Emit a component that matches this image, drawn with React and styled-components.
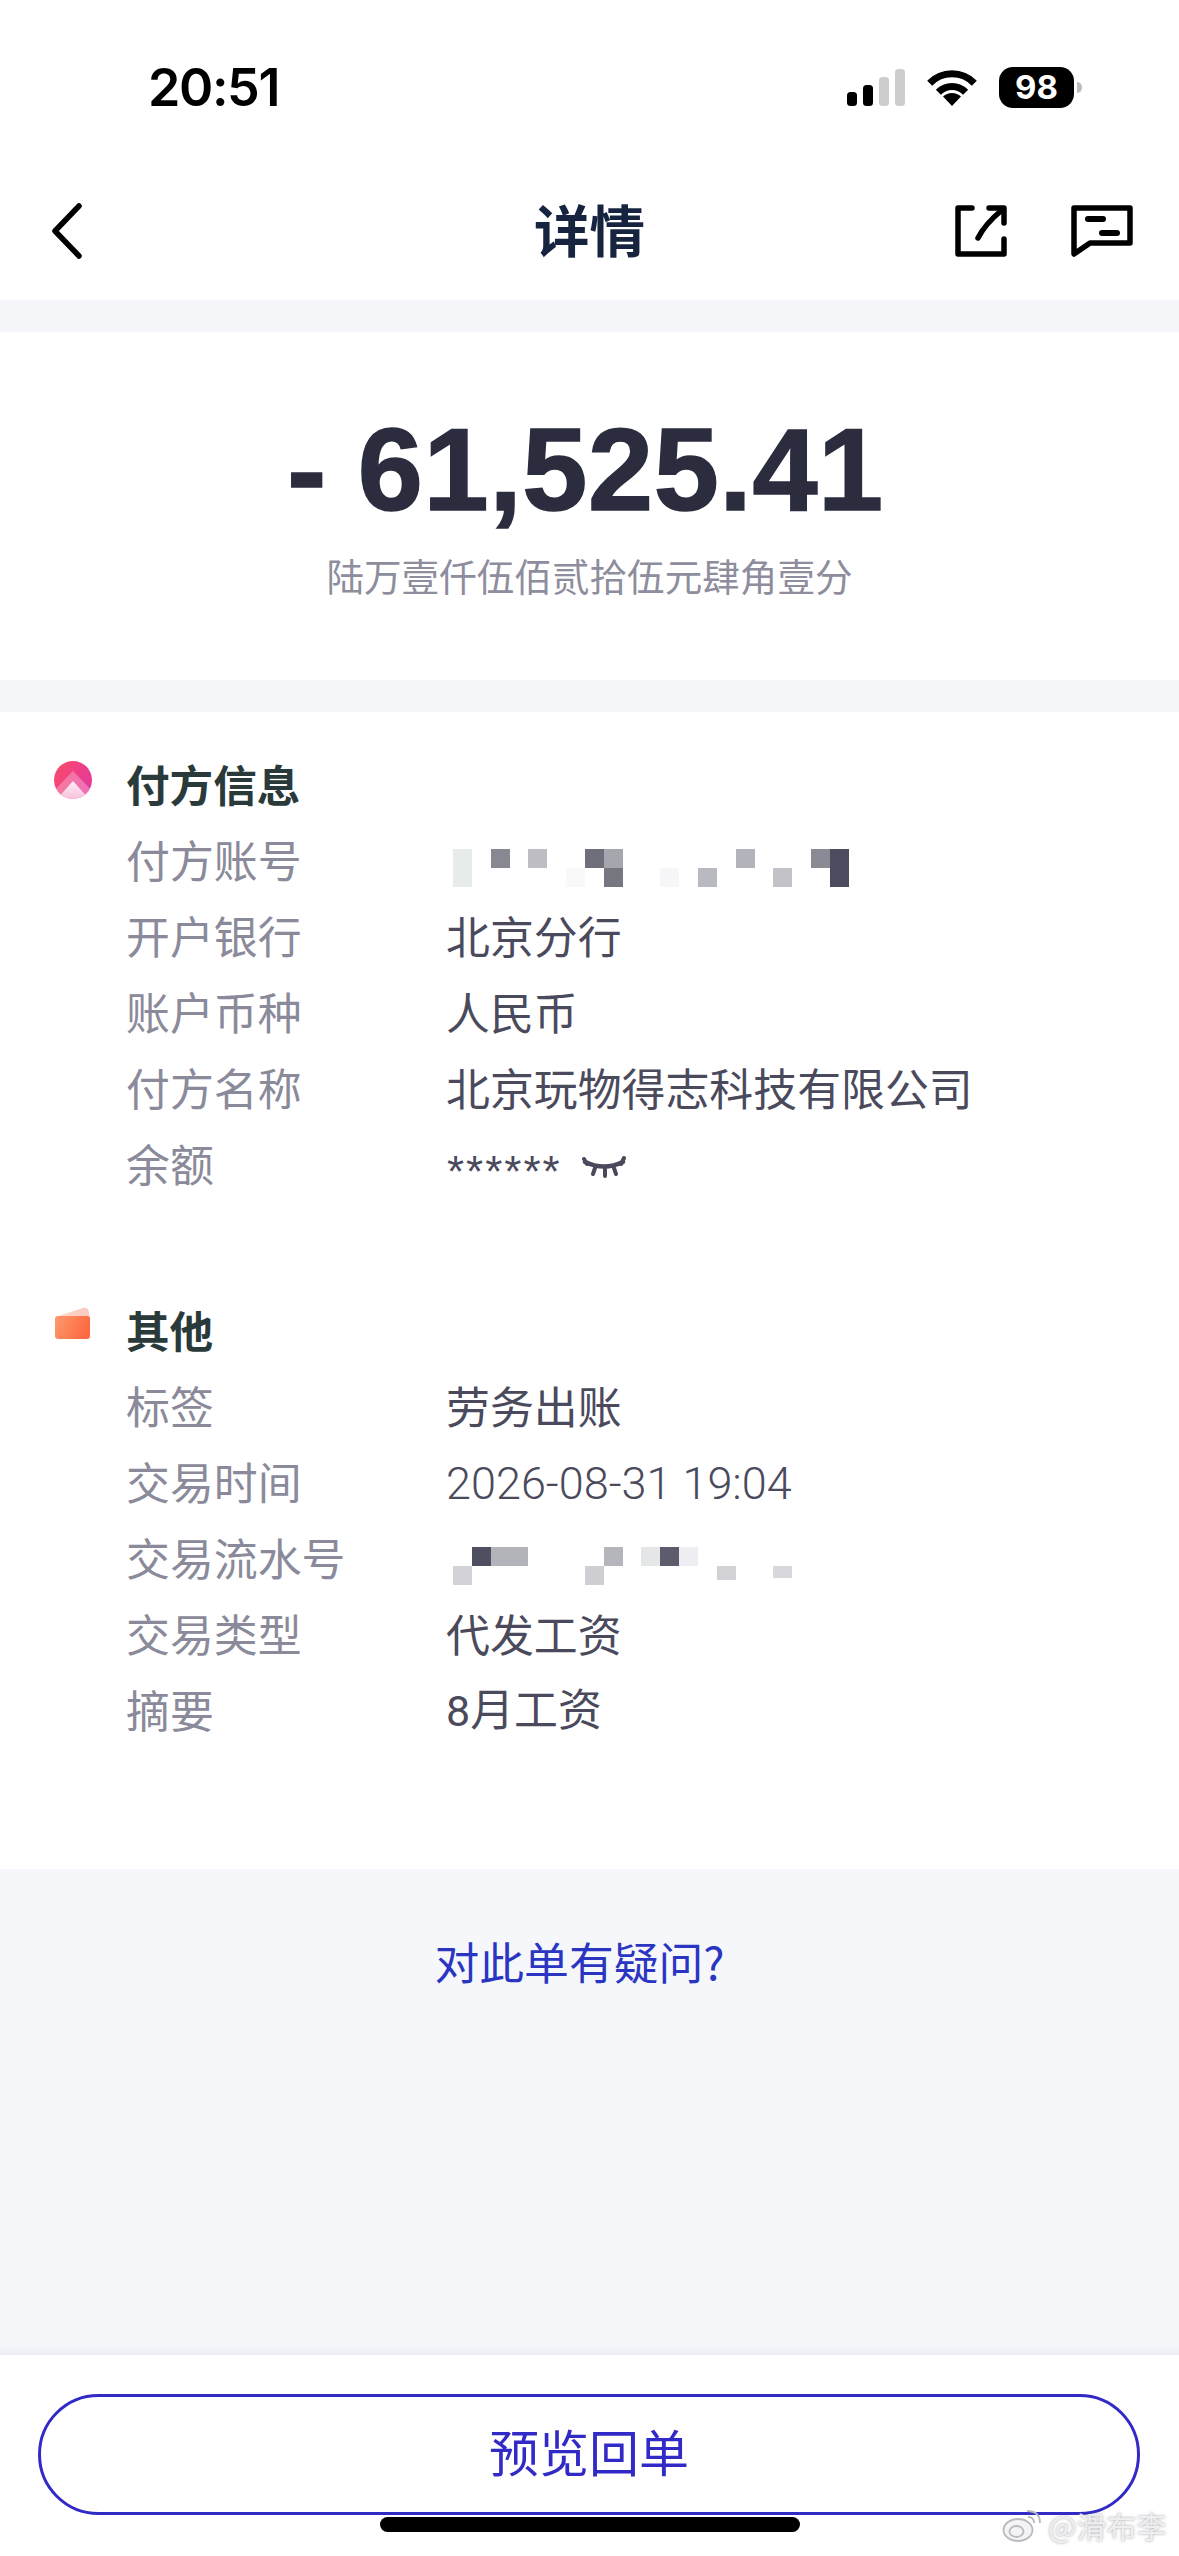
import React from "react";
import styled, { createGlobalStyle } from "styled-components";

const cjk = `"Noto Sans CJK SC", "Noto Sans", sans-serif`;

const Global = createGlobalStyle`
  html, body { margin: 0; padding: 0; background: #fff; }
  * { box-sizing: border-box; }
  body { font-family: ${cjk}; }
`;

const Page = styled.div`
  position: relative;
  width: 1179px;
  height: 2556px;
  overflow: hidden;
  display: flex;
  flex-direction: column;
  background: #fff;
`;

const StatusBar = styled.div`
  height: 176px;
  flex: none;
  padding: 60px 105px 0 148px;
  display: flex;
  justify-content: space-between;
  align-items: flex-start;
`;

const Time = styled.div`
  font: 600 52px/56px Inter, "Liberation Sans", sans-serif;
  letter-spacing: -1.4px;
  color: #000;
`;

const StatusIcons = styled.div`
  display: flex;
  align-items: center;
  padding-top: 7px;
  gap: 22px;
`;

const Battery = styled.div`
  position: relative;
  width: 75px;
  height: 41px;
  border-radius: 14px;
  background: #000;
  color: #fff;
  font: 700 33px/41px Inter, "Liberation Sans", sans-serif;
  text-align: center;
  &::after {
    content: "";
    position: absolute;
    right: -8px;
    top: 15px;
    width: 5px;
    height: 11px;
    border-radius: 0 6px 6px 0;
    background: #bdbdbd;
  }
`;

const NavBar = styled.div`
  height: 124px;
  flex: none;
  padding: 0 45px 14px 51px;
  display: flex;
  align-items: center;
  justify-content: space-between;
`;

const NavTitle = styled.div`
  position: absolute;
  left: 0;
  right: 0;
  top: 192px;
  text-align: center;
  font: 700 55.5px/72px ${cjk};
  color: #17243f;
`;

const NavActions = styled.div`
  display: flex;
  align-items: center;
  gap: 62px;
`;

const Band = styled.div`
  height: 32px;
  flex: none;
  background: #f6f7fb;
`;

const AmountBlock = styled.div`
  height: 348px;
  flex: none;
  padding: 72px 8px 0 0;
  display: flex;
  flex-direction: column;
  align-items: center;
`;

const Amount = styled.div`
  font: 700 117px/132px "Liberation Sans", Arial, sans-serif;
  letter-spacing: 0.6px;
  word-spacing: -2px;
  -webkit-text-stroke: 1.6px #2b2d3f;
  color: #2b2d3f;
`;

const AmountWords = styled.div`
  margin: 12px -8px 0 0;
  font: 400 37.6px/54px ${cjk};
  color: #8d8d9d;
`;

const Details = styled.div`
  height: 1157px;
  flex: none;
  padding-top: 37px;
  display: flex;
  flex-direction: column;
  gap: 90px;
`;

const Group = styled.section`
  display: flex;
  flex-direction: column;
`;

const GroupHead = styled.div`
  height: 76px;
  padding: 0 0 7px 53px;
  display: flex;
  align-items: center;
  font: 700 43.6px/69px ${cjk};
  color: #2a3a3a;
`;

const GroupIcon = styled.svg`
  width: 40px;
  height: 40px;
  flex: none;
  margin: 0 33px 7px 0;
`;

const Row = styled.div`
  height: 76px;
  padding-left: 126px;
  display: flex;
  align-items: center;
  font: 400 43.9px/69px ${cjk};
`;

const Label = styled.div`
  width: 320px;
  flex: none;
  padding-bottom: 7px;
  color: #8a8a9a;
`;

const Value = styled.div`
  padding-bottom: 7px;
  color: #4a4a5c;
`;

const DateValue = styled.div`
  padding-bottom: 4px;
  color: #4a4a5c;
  font: 300 45px/69px Roboto, ${cjk};
`;

const Digit = styled.span`
  font: 400 43px/69px Roboto, ${cjk};
`;

const Stars = styled.div`
  display: flex;
  align-items: center;
  gap: 19px;
  margin-left: 1px;
  color: #4a4a5c;
  font: 400 44px/76px "Liberation Sans", sans-serif;
  letter-spacing: 2px;
`;

const StarsText = styled.span`
  height: 76px;
  margin-top: 10px;
`;

const Mosaic = styled.div`
  display: grid;
  grid-template-columns: repeat(21, 18.85px);
  grid-template-rows: 19px 19px;
  margin: 10px 0 0 7px;
`;

const Cell = styled.i`
  display: block;
  grid-column: ${(p) => p.$c + 1} / span ${(p) => p.$w || 1};
  grid-row: ${(p) => p.$r + 1} / span ${(p) => p.$h || 1};
  height: ${(p) => (p.$short ? `${p.$short}px` : "auto")};
  background: ${(p) => p.$bg};
`;

const Help = styled.div`
  flex: 1;
  background: #f6f7fb;
  padding: 60px 20px 0 0;
  text-align: center;
  font: 400 44.8px/64px ${cjk};
  color: #2a36c2;
  box-shadow: inset 0 -14px 14px -14px rgba(60, 60, 90, 0.1);
`;

const Footer = styled.div`
  height: 201px;
  flex: none;
  padding: 39px 39px 0 38px;
`;

const PreviewButton = styled.div`
  height: 121px;
  padding-bottom: 10px;
  border: 3.5px solid #322ac6;
  border-radius: 61px;
  display: flex;
  align-items: center;
  justify-content: center;
  font: 400 50px/1 ${cjk};
  color: #322ac6;
`;

const HomeIndicator = styled.div`
  position: absolute;
  left: 380px;
  top: 2517px;
  width: 420px;
  height: 15px;
  border-radius: 8px;
  background: #000;
`;

const Watermark = styled.div`
  position: absolute;
  left: 1002px;
  top: 2507px;
  display: flex;
  align-items: center;
  gap: 5px;
  font: 400 30px/36px ${cjk};
  color: #efeff1;
  text-shadow: 0 0 3px rgba(90, 90, 100, 0.55);
  white-space: nowrap;
`;

const Back = () => (
  <svg width="32" height="56" viewBox="0 0 32 56" fill="none">
    <path d="M28 3 L4 28 L28 53" stroke="#000" strokeWidth="5.5" strokeLinecap="round" strokeLinejoin="round" />
  </svg>
);

const Share = () => (
  <svg width="54" height="54" viewBox="0 0 54 54" fill="none" stroke="#000" strokeWidth="5.5" strokeLinecap="round" strokeLinejoin="round">
    <path d="M18 4 H4 V50 H50 V35" />
    <path d="M35 4 H50 V19" />
    <path d="M24 34 Q31 20 48 6" />
  </svg>
);

const Message = () => (
  <svg width="64" height="54" viewBox="0 0 64 54" fill="none" stroke="#000" strokeWidth="5.5" strokeLinecap="round" strokeLinejoin="round">
    <path d="M4 4 H60 V39 H20 L4 50 Z" />
    <path d="M18 15 H33" strokeWidth="6" />
    <path d="M32 29 H47" strokeWidth="6" />
  </svg>
);

const Signal = () => (
  <svg width="58" height="37" viewBox="0 0 58 37">
    <rect x="0" y="23" width="10" height="14" rx="3.5" fill="#000" />
    <rect x="16" y="16" width="10" height="21" rx="3.5" fill="#000" />
    <rect x="32" y="8" width="10" height="29" rx="3.5" fill="#cdcdcd" />
    <rect x="48" y="0" width="10" height="37" rx="3.5" fill="#cdcdcd" />
  </svg>
);

const Wifi = () => (
  <svg width="50" height="37" viewBox="0 0 50 37" fill="none" stroke="#000" strokeWidth="7">
    <path d="M2.7 14.2 A31 31 0 0 1 47.3 14.2" />
    <path d="M11.4 23.2 A19 19 0 0 1 38.6 23.2" />
    <path d="M25 37 L16 27.5 A13 13 0 0 1 34 27.5 Z" fill="#000" stroke="none" />
  </svg>
);

const Eye = () => (
  <svg width="46" height="22" viewBox="0 0 46 22" fill="none" stroke="#4a4a5c" strokeWidth="4.5" strokeLinecap="round">
    <path d="M4 6 Q23 15 42 6" />
    <path d="M3 3 L6 8 M14 12 L12 18 M24 13 L24 20 M33 12 L35 18 M43 2 L40 8" strokeWidth="4" />
  </svg>
);

const PeakIcon = () => (
  <GroupIcon viewBox="0 0 40 40">
    <defs>
      <linearGradient id="peakBg" x1="0" y1="0" x2="1" y2="0.6">
        <stop offset="0" stopColor="#fb4a68" />
        <stop offset="1" stopColor="#e5399c" />
      </linearGradient>
      <linearGradient id="peakIn" x1="0" y1="0" x2="0" y2="1">
        <stop offset="0" stopColor="#fff" stopOpacity="0.9" />
        <stop offset="1" stopColor="#f7d2e6" stopOpacity="0.8" />
      </linearGradient>
      <clipPath id="peakClip"><circle cx="20" cy="20" r="19" /></clipPath>
    </defs>
    <circle cx="20" cy="20" r="19" fill="url(#peakBg)" />
    <g clipPath="url(#peakClip)">
      <path d="M20 11 L44 36 V40 H-4 V36 Z" fill="#fff" fillOpacity="0.28" />
      <path d="M20 21 L37 40 H3 Z" fill="url(#peakIn)" />
    </g>
  </GroupIcon>
);

const WalletIcon = () => (
  <GroupIcon viewBox="0 0 40 40">
    <defs>
      <linearGradient id="walletBg" x1="0" y1="0" x2="1" y2="0.3">
        <stop offset="0" stopColor="#ff9a6e" />
        <stop offset="1" stopColor="#fb6a42" />
      </linearGradient>
      <linearGradient id="walletFlap" x1="0" y1="0" x2="1" y2="0">
        <stop offset="0" stopColor="#fdd8c8" />
        <stop offset="1" stopColor="#fbc9c0" />
      </linearGradient>
    </defs>
    <path d="M5 12 Q5 10 8 9 L30 2 Q35 1 36 6 L37 12 Z" fill="url(#walletFlap)" />
    <rect x="2" y="10" width="35" height="23" rx="3" fill="url(#walletBg)" />
  </GroupIcon>
);

const account = [
  [0, 0, "#e8ebeb", 1, 2], [2, 0, "#888892"], [4, 0, "#bdbdc3"], [7, 0, "#6f6f7b"], [8, 0, "#a6a6ae"],
  [15, 0, "#b3b3bb"], [19, 0, "#8a8a94"], [20, 0, "#4c4c5e", 1, 2],
  [6, 1, "#f9f9f9"], [8, 1, "#777782"], [11, 1, "#f7f7fa"], [13, 1, "#b9b9c1"], [17, 1, "#c2c2c8"],
];

const serial = [
  [1, 0, "#4f4f62"], [2, 0, "#b3b3ba", 2], [8, 0, "#b5b5bc"], [10, 0, "#e4e6e8"], [11, 0, "#5c5c6c"], [12, 0, "#eeeef2"],
  [0, 1, "#d3d3d7"], [7, 1, "#cfcfd3"], [14, 1, "#d2d2d6", 1, 1, 14], [17, 1, "#d7d7dc", 1, 1, 12],
];

const Blur = ({ cells }) => (
  <Mosaic>
    {cells.map(([c, r, bg, w, h, short]) => (
      <Cell key={`${c}-${r}`} $c={c} $r={r} $bg={bg} $w={w} $h={h} $short={short} />
    ))}
  </Mosaic>
);

export default function App() {
  return (
    <Page>
      <Global />
      <StatusBar>
        <Time>20:51</Time>
        <StatusIcons>
          <Signal />
          <Wifi />
          <Battery>98</Battery>
        </StatusIcons>
      </StatusBar>
      <NavBar>
        <Back />
        <NavTitle>详情</NavTitle>
        <NavActions>
          <Share />
          <Message />
        </NavActions>
      </NavBar>
      <Band />
      <AmountBlock>
        <Amount>- 61,525.41</Amount>
        <AmountWords>陆万壹仟伍佰贰拾伍元肆角壹分</AmountWords>
      </AmountBlock>
      <Band />
      <Details>
        <Group>
          <GroupHead><PeakIcon />付方信息</GroupHead>
          <Row><Label>付方账号</Label><Blur cells={account} /></Row>
          <Row><Label>开户银行</Label><Value>北京分行</Value></Row>
          <Row><Label>账户币种</Label><Value>人民币</Value></Row>
          <Row><Label>付方名称</Label><Value>北京玩物得志科技有限公司</Value></Row>
          <Row>
            <Label>余额</Label>
            <Stars><StarsText>******</StarsText><Eye /></Stars>
          </Row>
        </Group>
        <Group>
          <GroupHead><WalletIcon />其他</GroupHead>
          <Row><Label>标签</Label><Value>劳务出账</Value></Row>
          <Row><Label>交易时间</Label><DateValue>2026-08-31 19:04</DateValue></Row>
          <Row><Label>交易流水号</Label><Blur cells={serial} /></Row>
          <Row><Label>交易类型</Label><Value>代发工资</Value></Row>
          <Row><Label>摘要</Label><Value><Digit>8</Digit>月工资</Value></Row>
        </Group>
      </Details>
      <Help>对此单有疑问?</Help>
      <Footer>
        <PreviewButton>预览回单</PreviewButton>
      </Footer>
      <HomeIndicator />
      <Watermark>
        <svg width="41" height="33" viewBox="0 0 41 33" fill="#f4f4f6" stroke="#b9b9bf" strokeWidth="1.8">
          <ellipse cx="16" cy="21" rx="14.5" ry="11" />
          <ellipse cx="14.5" cy="22.5" rx="7" ry="5.5" fill="none" />
          <path d="M25 2 Q38 2 38 14" fill="none" />
          <path d="M26 8 Q32 8 32 14" fill="none" />
        </svg>
        @滑布李
      </Watermark>
    </Page>
  );
}
